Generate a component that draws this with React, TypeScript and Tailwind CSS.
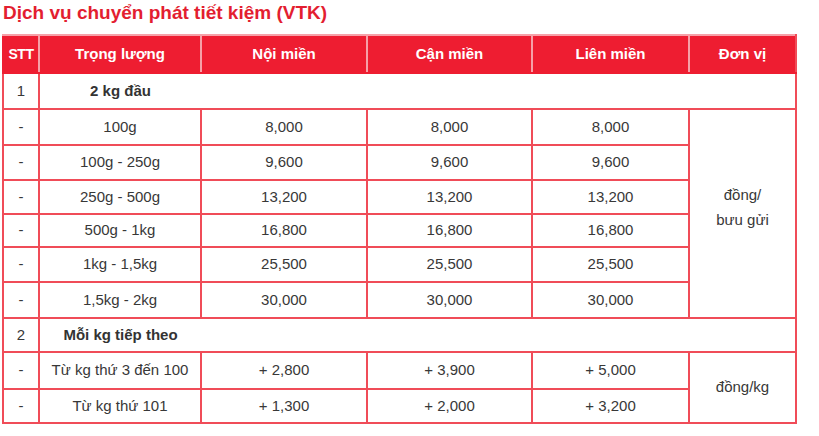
import React from 'react';

const rows1 = [
  { w: '100g', a: '8,000', b: '8,000', c: '8,000', h: 'h-[36px]' },
  { w: '100g - 250g', a: '9,600', b: '9,600', c: '9,600', h: 'h-[35px]' },
  { w: '250g - 500g', a: '13,200', b: '13,200', c: '13,200', h: 'h-[34px]' },
  { w: '500g - 1kg', a: '16,800', b: '16,800', c: '16,800', h: 'h-[33px]' },
  { w: '1kg - 1,5kg', a: '25,500', b: '25,500', c: '25,500', h: 'h-[35px]' },
  { w: '1,5kg - 2kg', a: '30,000', b: '30,000', c: '30,000', h: 'h-[36px]' },
];

const rows2 = [
  { w: 'Từ kg thứ 3 đến 100', a: '+ 2,800', b: '+ 3,900', c: '+ 5,000', h: 'h-[37px]' },
  { w: 'Từ kg thứ 101', a: '+ 1,300', b: '+ 2,000', c: '+ 3,200', h: 'h-[34px]' },
];

const td = 'border-2 border-[#f04c58] text-center align-middle p-0';
const th = 'border-2 border-[#f6a0a8] border-b-[#ee1d31] bg-[#ee1d31] text-white font-bold text-center align-middle p-0';

const App: React.FC = () => {
  return (
    <div
      className="w-[819px] h-[436px] bg-white text-[#383838] text-[15px]"
      style={{ fontFamily: '"Liberation Sans", Arial, sans-serif' }}
    >
      <h1 className="pl-[3px] pt-[1px] h-[34px] text-[19px] font-bold text-[#e31e30] leading-[24px]">
        Dịch vụ chuyển phát tiết kiệm (VTK)
      </h1>
      <table className="ml-[2px] w-[793px] table-fixed border-collapse">
        <colgroup>
          <col className="w-[36px]" />
          <col className="w-[162px]" />
          <col className="w-[166px]" />
          <col className="w-[165px]" />
          <col className="w-[157px]" />
          <col className="w-[107px]" />
        </colgroup>
        <thead>
          <tr className="h-[38px]">
            <th className={`${th} border-l-[#ee1d31] text-[14px] tracking-[-0.5px]`}>STT</th>
            <th className={th}>Trọng lượng</th>
            <th className={th}>Nội miền</th>
            <th className={th}>Cận miền</th>
            <th className={th}>Liên miền</th>
            <th className={`${th} border-r-[#f04c58]`}>Đơn vị</th>
          </tr>
        </thead>
        <tbody>
          <tr className="h-[36px]">
            <td className={td}>1</td>
            <td className={`${td} border-r-0 font-bold text-[#333]`}>2 kg đầu</td>
            <td className={`${td} border-l-0`} colSpan={4}></td>
          </tr>
          {rows1.map((r, i) => (
            <tr key={r.w} className={r.h}>
              <td className={td}>-</td>
              <td className={td}>{r.w}</td>
              <td className={td}>{r.a}</td>
              <td className={td}>{r.b}</td>
              <td className={td}>{r.c}</td>
              {i === 0 && (
                <td className={`${td} leading-[25px] pb-[14px]`} rowSpan={6}>
                  đồng/
                  <br />
                  bưu gửi
                </td>
              )}
            </tr>
          ))}
          <tr className="h-[34px]">
            <td className={td}>2</td>
            <td className={`${td} border-r-0 font-bold text-[#333]`}>Mỗi kg tiếp theo</td>
            <td className={`${td} border-l-0`} colSpan={4}></td>
          </tr>
          {rows2.map((r, i) => (
            <tr key={r.w} className={r.h}>
              <td className={td}>-</td>
              <td className={td}>{r.w}</td>
              <td className={td}>{r.a}</td>
              <td className={td}>{r.b}</td>
              <td className={td}>{r.c}</td>
              {i === 0 && (
                <td className={td} rowSpan={2}>
                  đồng/kg
                </td>
              )}
            </tr>
          ))}
        </tbody>
      </table>
    </div>
  );
};

export default App;
